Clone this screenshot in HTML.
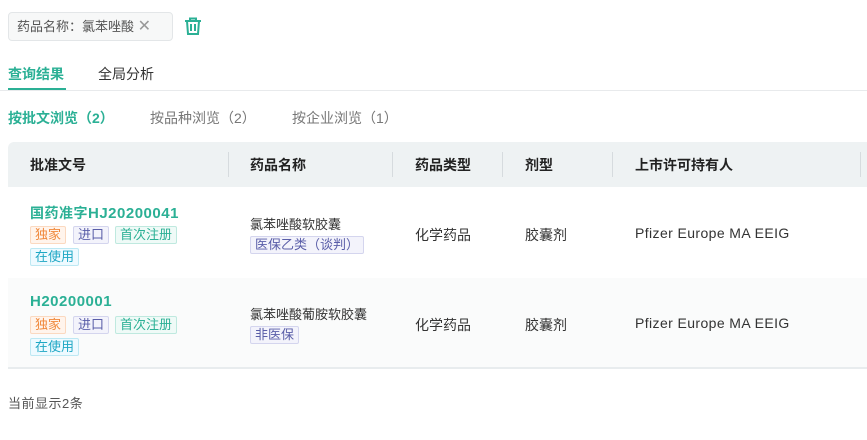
<!DOCTYPE html>
<html><head><meta charset="utf-8"><style>
*{margin:0;padding:0;box-sizing:border-box}
body{width:867px;height:440px;background:#fff;font-family:"Liberation Sans","Noto Sans CJK SC",sans-serif;position:relative;overflow:hidden;color:#333}
.a{position:absolute;white-space:nowrap}
.tag{position:absolute;height:18px;line-height:16px;font-size:13px;padding:0 4px;border:1px solid;border-radius:2px}
.o{color:#f0883a;background:#fff4ec;border-color:#fbd9c0}
.p{color:#5a5ea8;background:#f3f3fb;border-color:#d4d5ee}
.g{color:#2bb095;background:#effaf7;border-color:#bfe9df}
.c{color:#1ea7c4;background:#eefaff;border-color:#bde8f3}
.sep{position:absolute;top:152px;width:1px;height:25px;background:#d6dbde}
.pf{font-size:14px;letter-spacing:0.4px;color:#333}
</style></head><body>
<div class="a" style="left:8px;top:12px;width:165px;height:29px;border:1px solid #e3e6e8;border-radius:4px;background:#f7f8f8;font-size:13px;line-height:27px;padding-left:8px;color:#555">药品名称：氯苯唑酸 <span style="color:#999;font-size:16px">✕</span></div>
<svg class="a" style="left:183px;top:16px" width="20" height="20" viewBox="0 0 20 20" fill="none" stroke="#2bb095" stroke-width="2"><path d="M2 5h16M7 5V2.5h6V5M4 5l1 13h10l1-13M8 8v7M12 8v7"/></svg>
<div class="a" style="left:8px;top:64px;font-size:14px;font-weight:bold;color:#2bb095">查询结果</div>
<div class="a" style="left:8px;top:88px;width:58px;height:2px;background:#2bb095"></div>
<div class="a" style="left:98px;top:64px;font-size:14px;color:#333">全局分析</div>
<div class="a" style="left:0;top:90px;width:867px;height:1px;background:#e8eaec"></div>
<div class="a" style="left:8px;top:108px;font-size:14px;font-weight:bold;color:#2bb095">按批文浏览（2）</div>
<div class="a" style="left:150px;top:108px;font-size:14px;color:#777">按品种浏览（2）</div>
<div class="a" style="left:292px;top:108px;font-size:14px;color:#777">按企业浏览（1）</div>
<div class="a" style="left:8px;top:142px;width:859px;height:45px;background:#eef2f3;border-radius:6px 0 0 0"></div>
<div class="a" style="left:30px;top:155px;font-size:14px;font-weight:bold;color:#222">批准文号</div>
<div class="a" style="left:250px;top:155px;font-size:14px;font-weight:bold;color:#222">药品名称</div>
<div class="a" style="left:415px;top:155px;font-size:14px;font-weight:bold;color:#222">药品类型</div>
<div class="a" style="left:525px;top:155px;font-size:14px;font-weight:bold;color:#222">剂型</div>
<div class="a" style="left:635px;top:155px;font-size:14px;font-weight:bold;color:#222">上市许可持有人</div>
<div class="sep" style="left:228px"></div><div class="sep" style="left:392px"></div><div class="sep" style="left:502px"></div><div class="sep" style="left:612px"></div><div class="sep" style="left:860px"></div>
<div class="a" style="left:8px;top:278px;width:859px;height:90px;background:#fafbfb"></div>
<div class="a" style="left:8px;top:367px;width:859px;height:2px;background:#e8ecee"></div>
<!-- row1 -->
<div class="a" style="left:30px;top:203px;font-size:14px;font-weight:bold;color:#2bb095;letter-spacing:0.5px">国药准字<span style="font-size:15px">HJ20200041</span></div>
<div class="tag o" style="left:30px;top:226px">独家</div><div class="tag p" style="left:73px;top:226px">进口</div><div class="tag g" style="left:115px;top:226px">首次注册</div>
<div class="tag c" style="left:30px;top:248px">在使用</div>
<div class="a" style="left:250px;top:214px;font-size:13px;color:#333">氯苯唑酸软胶囊</div>
<div class="tag p" style="left:250px;top:236px">医保乙类（谈判）</div>
<div class="a" style="left:415px;top:225px;font-size:14px">化学药品</div>
<div class="a" style="left:525px;top:225px;font-size:14px">胶囊剂</div>
<div class="a pf" style="left:635px;top:225px">Pfizer Europe MA EEIG</div>
<!-- row2 -->
<div class="a" style="left:30px;top:293px;font-size:15px;font-weight:bold;color:#2bb095;letter-spacing:0.5px">H20200001</div>
<div class="tag o" style="left:30px;top:316px">独家</div><div class="tag p" style="left:73px;top:316px">进口</div><div class="tag g" style="left:115px;top:316px">首次注册</div>
<div class="tag c" style="left:30px;top:338px">在使用</div>
<div class="a" style="left:250px;top:304px;font-size:13px;color:#333">氯苯唑酸葡胺软胶囊</div>
<div class="tag p" style="left:250px;top:326px">非医保</div>
<div class="a" style="left:415px;top:315px;font-size:14px">化学药品</div>
<div class="a" style="left:525px;top:315px;font-size:14px">胶囊剂</div>
<div class="a pf" style="left:635px;top:315px">Pfizer Europe MA EEIG</div>
<div class="a" style="left:8px;top:393px;font-size:13px;color:#555;letter-spacing:0.5px">当前显示2条</div>
</body></html>
